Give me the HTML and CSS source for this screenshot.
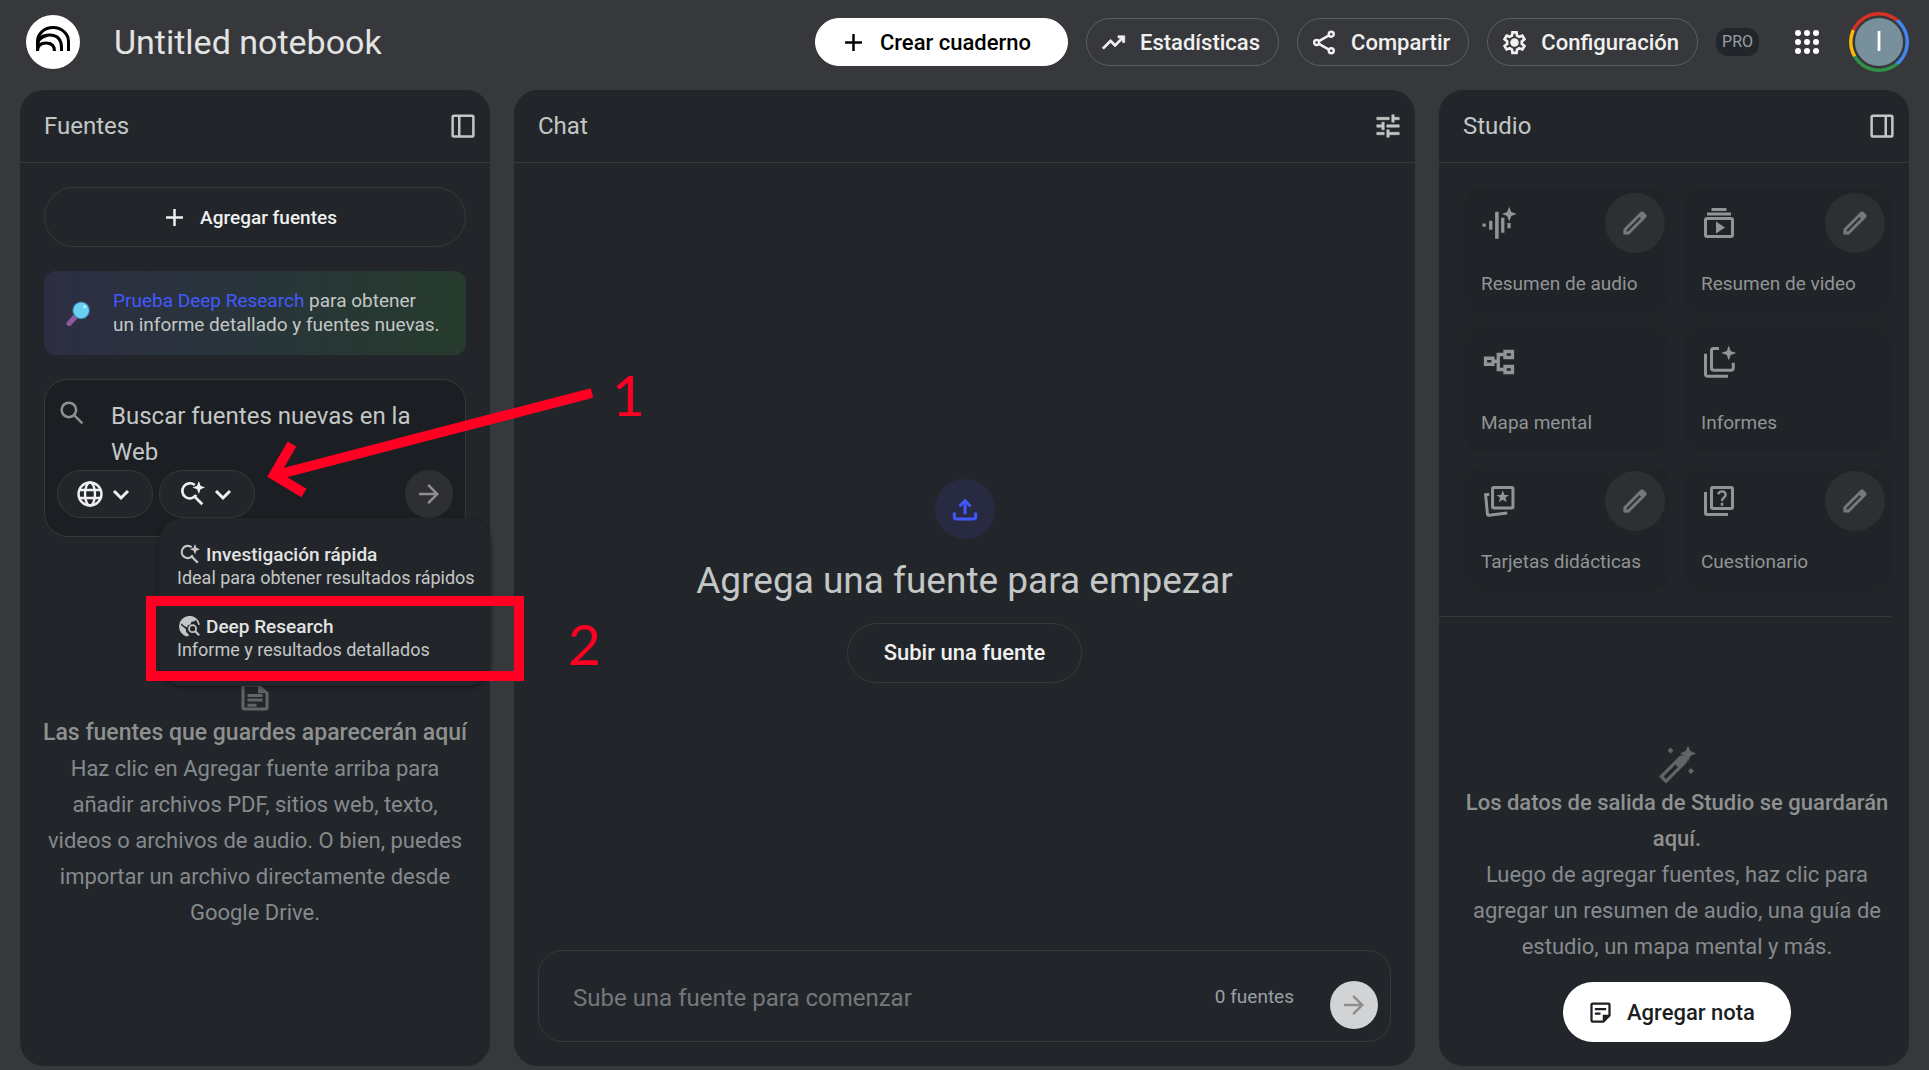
FILE: index.html
```html
<!DOCTYPE html>
<html lang="es">
<head>
  <meta charset="UTF-8">
  <meta name="viewport" content="width=device-width, initial-scale=1.0">
  <title>Untitled notebook</title>
  <link rel="stylesheet" href="styles.css">
</head>
<body>
  <!-- Shared icons -->
  <svg class="defs" width="0" height="0" aria-hidden="true">
    <symbol id="i-plus" viewBox="0 0 24 24"><path d="M10.900 4.500h2.200v6.400h6.400v2.200h-6.400v6.400h-2.200v-6.400H4.500v-2.200h6.400z"/></symbol>
    <symbol id="i-pencil" viewBox="0 0 24 24"><path d="M5 19h1.400L17 8.400 15.600 7 5 17.600zm-2 2v-4.250L16.200 3.600q.3-.3.660-.450Q17.200 3 17.600 3t.770.150.650.450L20.400 5q.3.280.440.650.160.370.160.750 0 .4-.160.760-.140.360-.440.660L7.250 21z" stroke="currentColor" stroke-width=".5"/></symbol>
    <symbol id="i-arrow" viewBox="0 0 24 24"><path d="M12 20l-1.400-1.400L16.200 13H4v-2h12.200l-5.600-5.600L12 4l8 8z"/></symbol>
    <symbol id="i-down" viewBox="0 0 24 24"><path d="M5 9l7 7 7-7" fill="none" stroke="currentColor" stroke-width="3"/></symbol>
    <symbol id="i-spark-search" viewBox="0 0 24 24"><path d="M14.500 3.700A7 7 0 1 0 15.900 13" fill="none" stroke="currentColor" stroke-width="2.400"/><path d="M13.500 13.500l8 8" fill="none" stroke="currentColor" stroke-width="2.600"/><path d="M18.300 0l1.600 4.400L24 6l-4.100 1.600L18.300 12l-1.600-4.400L12.500 6l4.200-1.600z"/></symbol>
  </svg>

  <header class="topbar">
    <a class="logo" href="#" aria-label="Inicio">
      <svg viewBox="0 0 54 54" fill="none" stroke="#000" stroke-width="3">
        <path d="M11.500 36V26.500a15.500 14 0 0 1 31 0V36"/>
        <path d="M11.500 30q1-10 12-10 12 0 12 13v3"/>
        <path d="M11.500 36q0-8 8.500-8t8.500 8"/>
        <path d="M11.500 27q4-5 10-6" stroke-width="2"/>
      </svg>
    </a>
    <h1 class="notebook-title">Untitled notebook</h1>
    <div class="actions">
      <button class="btn btn-primary"><svg class="icon"><use href="#i-plus"/></svg>Crear cuaderno</button>
      <button class="btn"><svg class="icon" viewBox="0 0 24 24"><path d="M3.400 18L2 16.600l7.400-7.450 4 4L18.600 8H16V6h6v6h-2V9.400L13.400 16l-4-4z" stroke="currentColor" stroke-width=".6"/></svg>Estadísticas</button>
      <button class="btn"><svg class="icon" viewBox="0 0 24 24" fill="none" stroke="currentColor" stroke-width="2.200"><circle cx="18" cy="4.600" r="2.200"/><circle cx="5" cy="12" r="2.200"/><circle cx="18" cy="19.400" r="2.200"/><path d="M7 10.800l9-5.100M7 13.200l9 5.100"/></svg>Compartir</button>
      <button class="btn"><svg class="icon" viewBox="0 0 24 24"><path d="M10.200 2h3.600l.5 2.900 1.900 1.100 2.800-1 1.800 3.100-2.300 1.900v2.200l2.300 1.900-1.800 3.100-2.800-1-1.900 1.100-.5 2.900h-3.600l-.5-2.900-1.900-1.100-2.800 1-1.800-3.100 2.300-1.900v-2.200L3.200 8.100 5 5l2.800 1 1.900-1.100z" transform="translate(0 1)" fill="none" stroke="currentColor" stroke-width="2.400"/><circle cx="12" cy="12" r="3.800"/></svg>Configuración</button>
      <span class="pro">PRO</span>
      <button class="apps" aria-label="Aplicaciones">
        <svg viewBox="0 0 24 24"><circle cx="3" cy="3" r="3"/><circle cx="12" cy="3" r="3"/><circle cx="21" cy="3" r="3"/><circle cx="3" cy="12" r="3"/><circle cx="12" cy="12" r="3"/><circle cx="21" cy="12" r="3"/><circle cx="3" cy="21" r="3"/><circle cx="12" cy="21" r="3"/><circle cx="21" cy="21" r="3"/></svg>
      </button>
      <button class="avatar" aria-label="Cuenta"><span>I</span></button>
    </div>
  </header>

  <main class="panels">
    <section class="panel">
      <div class="panel-head">
        <h2>Fuentes</h2>
        <button class="icon-btn" aria-label="Contraer fuentes"><svg viewBox="0 0 24 24" fill="none" stroke="currentColor" stroke-width="2"><rect x="3.700" y="3.700" width="16.600" height="16.600" rx="1"/><path d="M9 4v16"/></svg></button>
      </div>
      <div class="panel-body sources">
        <button class="btn-outline add-source"><svg class="icon"><use href="#i-plus"/></svg>Agregar fuentes</button>

        <div class="promo">
          <svg class="lens" viewBox="0 0 24 24"><path d="M3 21.500l6-6.500" stroke="#8e5a9e" stroke-width="5" stroke-linecap="round"/><circle cx="14.500" cy="9" r="8.500" fill="#3b6ea8"/><circle cx="14.500" cy="9" r="7.500" fill="#68d0f0"/><circle cx="18" cy="5.500" r="1.500" fill="#c8f2ff"/></svg>
          <p><a href="#">Prueba Deep Research</a> para obtener<br>un informe detallado y fuentes nuevas.</p>
        </div>

        <div class="search-box">
          <div class="search-row">
            <svg class="search-icon" viewBox="0 0 24 24" fill="none" stroke="currentColor" stroke-width="2"><circle cx="9.500" cy="9.500" r="5.800"/><path d="M13.700 13.700l6.600 6.600"/></svg>
            <textarea rows="2" aria-label="Buscar fuentes" placeholder="Buscar fuentes nuevas en la Web"></textarea>
          </div>
          <div class="search-tools">
            <button class="chip" aria-label="Web">
              <svg class="chip-icon" viewBox="0 0 26 26" fill="none" stroke="currentColor" stroke-width="2.400"><circle cx="13" cy="13" r="11.500"/><ellipse cx="13" cy="13" rx="5" ry="11.500"/><path d="M2 9h22M2 17h22"/></svg>
              <svg class="caret"><use href="#i-down"/></svg>
            </button>
            <button class="chip" aria-label="Tipo de investigación" aria-expanded="true">
              <svg class="chip-icon"><use href="#i-spark-search"/></svg>
              <svg class="caret"><use href="#i-down"/></svg>
            </button>
            <button class="send" aria-label="Buscar"><svg><use href="#i-arrow"/></svg></button>
          </div>
          <div class="menu" role="menu">
            <button class="menu-item" role="menuitem">
              <span class="menu-title"><svg><use href="#i-spark-search"/></svg>Investigación rápida</span>
              <span class="menu-sub">Ideal para obtener resultados rápidos</span>
            </button>
            <button class="menu-item" role="menuitem">
              <span class="menu-title"><svg viewBox="0 0 24 24"><path d="M9.500 22.600A11 11 0 1 1 22.900 10" fill="none" stroke="currentColor" stroke-width="2"/><path d="M2 10l6 5v3l3 3v2C5 22 1 17 2 10zM5 4c4-4 11-4 14 0-1 3-4 2-5 3s0 3-2 3-3 1-2 3l-3-1-5-4z"/><circle cx="15.500" cy="14.500" r="4" fill="none" stroke="currentColor" stroke-width="2"/><path d="M18.500 17.500l4.500 4.500" fill="none" stroke="currentColor" stroke-width="2.400"/></svg>Deep Research</span>
              <span class="menu-sub">Informe y resultados detallados</span>
            </button>
          </div>
        </div>

        <div class="empty">
          <svg class="empty-doc" viewBox="0 0 24 24"><path d="M5 3h9l7 6v10q0 2-2 2H5q-2 0-2-2V5q0-2 2-2zm0 2v14h14V9.500h-5V5z"/><path d="M7 10h10v2H7zM7 13h10v2H7zM7 16.500h6v2H7z"/></svg>
          <h3>Las fuentes que guardes aparecerán aquí</h3>
          <p>Haz clic en Agregar fuente arriba para<br>añadir archivos PDF, sitios web, texto,<br>videos o archivos de audio. O bien, puedes<br>importar un archivo directamente desde<br>Google Drive.</p>
        </div>
      </div>
    </section>

    <section class="panel">
      <div class="panel-head">
        <h2>Chat</h2>
        <button class="icon-btn" aria-label="Configurar chat"><svg viewBox="0 0 24 24"><path d="M11 21v-6h2v2h8v2h-8v2zm-8-2v-2h6v2zm4-4v-2H3v-2h4V9h2v6zm4-2v-2h10v2zm4-4V3h2v2h4v2h-4v2zM3 7V5h10v2z" stroke="currentColor" stroke-width=".4"/></svg></button>
      </div>
      <div class="panel-body chat">
        <div class="chat-empty">
          <span class="upload"><svg viewBox="0 0 24 24"><path d="M11 16V7.800L8.400 10.400 7 9l5-5 5 5-1.400 1.400L13 7.800V16zm-5 5q-2 0-2.800-.6Q2.500 20 2.500 18.500V15h2v4h15v-4h2v3.500q0 1.500-.7 1.900-.8.600-2.800.6z" stroke="currentColor" stroke-width=".4"/></svg></span>
          <h3>Agrega una fuente para empezar</h3>
          <button class="btn-outline upload-btn">Subir una fuente</button>
        </div>
        <form class="composer">
          <input type="text" aria-label="Mensaje" placeholder="Sube una fuente para comenzar">
          <span class="count">0 fuentes</span>
          <button class="send send-light" type="button" aria-label="Enviar"><svg><use href="#i-arrow"/></svg></button>
        </form>
      </div>
    </section>

    <section class="panel">
      <div class="panel-head">
        <h2>Studio</h2>
        <button class="icon-btn" aria-label="Contraer Studio"><svg viewBox="0 0 24 24" fill="none" stroke="currentColor" stroke-width="2"><rect x="3.700" y="3.700" width="16.600" height="16.600" rx="1"/><path d="M15 4v16"/></svg></button>
      </div>
      <div class="panel-body studio">
        <div class="tiles">
          <div class="tile">
            <svg viewBox="0 0 24 24"><path d="M1 12.300h2.200v2.200H1zM5.400 10.500h2.200v6H5.400zM9.400 4.500h2.400v18H9.400zM13.400 8.500h2.200v10h-2.200zM17.600 12h2.200v3.500h-2.200zM18.800 1.200l1.400 3.400 3.600 1.400-3.600 1.400-1.400 3.600-1.400-3.600L14 6l3.400-1.400z"/></svg>
            <span>Resumen de audio</span>
            <button class="edit" aria-label="Personalizar resumen de audio"><svg><use href="#i-pencil"/></svg></button>
          </div>
          <div class="tile">
            <svg viewBox="0 0 24 24"><path d="M4 22q-2 0-2-2V10q0-2 2-2h16q2 0 2 2v10q0 2-2 2zm0-2h16V10H4zm6-1l6-4-6-4zM4 7V5h16v2zm3-3V2h10v2z"/></svg>
            <span>Resumen de video</span>
            <button class="edit" aria-label="Personalizar resumen de video"><svg><use href="#i-pencil"/></svg></button>
          </div>
          <div class="tile">
            <svg viewBox="0 0 24 24" fill="none" stroke="currentColor" stroke-width="2.200"><path d="M3 9.500h5v4H3zM16 5h5v4h-5zM16 15h5v4h-5zM8 11.500h3.500M16 7h-4.500v10H16"/></svg>
            <span>Mapa mental</span>
          </div>
          <div class="tile">
            <svg viewBox="0 0 24 24"><path d="M12 3H8.500Q7 3 7 4.500V16q0 1.500 1.500 1.500H20q1.500 0 1.500-1.500v-3.500M3 6.500V20q0 1.500 1.500 1.500H18" fill="none" stroke="currentColor" stroke-width="2"/><path d="M18.500 1l1.300 3.700L23.500 6l-3.700 1.300L18.500 11l-1.300-3.700L13.500 6l3.700-1.300z"/></svg>
            <span>Informes</span>
          </div>
          <div class="tile">
            <svg viewBox="0 0 24 24"><path d="M8.500 3h12q.8 0 .8.800v12q0 .8-.8.800h-12q-.8 0-.8-.8v-12q0-.8.800-.8zM5.500 7.500l-2.400.4 1.200 13q.1.700.9.600L17.500 20" fill="none" stroke="currentColor" stroke-width="2"/><path d="M14.500 5l1.200 3h3l-2.400 1.900.9 3-2.700-1.800-2.700 1.800.9-3L10.300 8h3z"/></svg>
            <span>Tarjetas didácticas</span>
            <button class="edit" aria-label="Personalizar tarjetas didácticas"><svg><use href="#i-pencil"/></svg></button>
          </div>
          <div class="tile">
            <svg viewBox="0 0 24 24" fill="none" stroke="currentColor" stroke-width="2"><rect x="7" y="3" width="14" height="14" rx=".8"/><path d="M3 6v14q0 1 1 1h14"/><path d="M11.500 7.500q.4-1.900 2.500-1.900 2.400 0 2.400 2.200 0 1-1.200 2-1.200 1-1.200 2.200M14 13.200v2" stroke-width="1.600"/></svg>
            <span>Cuestionario</span>
            <button class="edit" aria-label="Personalizar cuestionario"><svg><use href="#i-pencil"/></svg></button>
          </div>
        </div>
        <div class="studio-empty">
          <svg class="wand" viewBox="0 0 40 40"><path d="M2 31.500L22 11.500q4-3 7 0 3 3 0 7L9 38.500zm4.500 0L9 34l12-12-2.500-2.500z" fill-rule="evenodd"/><path d="M31 .5l2.400 5.600L39 8.500l-5.600 2.400L31 16.500l-2.400-5.600L23 8.500l5.600-2.400zM13.500 2.500l3 3-3 3-3-3zM34 23l3 3-3 3-3-3z"/></svg>
          <h3>Los datos de salida de Studio se guardarán<br>aquí.</h3>
          <p>Luego de agregar fuentes, haz clic para<br>agregar un resumen de audio, una guía de<br>estudio, un mapa mental y más.</p>
          <button class="note-btn"><svg viewBox="0 0 24 24"><path d="M5 5v14h9v-5h5V5zm0 16q-2 0-2-2V5q0-2 2-2h14q2 0 2 2v10l-6 6zm2-7v-2h5v2zm0-4V8h10v2z"/></svg>Agregar nota</button>
        </div>
      </div>
    </section>
  </main>

  <!-- Step marks drawn over the interface -->
  <svg class="mark-arrow" viewBox="0 0 330 110" aria-hidden="true"><path d="M327 9L11 91M27 60L9 91l30 18"/></svg>
  <span class="mark-number mark-one">1</span>
  <div class="mark-box"></div>
  <span class="mark-number mark-two">2</span>
</body>
</html>
```
FILE: styles.css
```css
* {
  box-sizing: border-box;
}

body {
  display: flex;
  flex-direction: column;
  min-height: 100vh;
  margin: 0;
  position: relative;
  background: #37383b;
  color: #c4c7c5;
  font-family: Roboto, "Liberation Sans", sans-serif;
  font-size: 19px;
}

h1, h2, h3, p {
  margin: 0;
  font-weight: 400;
}

button, input, textarea {
  font: inherit;
  color: inherit;
}

button {
  display: flex;
  align-items: center;
  justify-content: center;
  padding: 0;
  border: 0;
  background: none;
  cursor: pointer;
}

svg {
  flex: none;
  fill: currentColor;
}

svg[fill="none"] {
  fill: none;
}

.defs {
  position: absolute;
}

/* Top bar */
.topbar {
  display: flex;
  align-items: center;
  height: 90px;
  padding: 0 20px 6px 26px;
}

.logo {
  width: 54px;
  height: 54px;
  border-radius: 50%;
  background: #fff;
}

.notebook-title {
  margin-left: 34px;
  color: #e3e3e3;
  font-size: 34px;
}

.actions {
  display: flex;
  align-items: center;
  gap: 18px;
  margin-left: auto;
}

.icon {
  width: 27px;
  height: 27px;
}

.btn {
  gap: 13px;
  height: 48px;
  padding: 0 18px 0 13px;
  border: 1px solid #5c5e61;
  border-radius: 24px;
  color: #f0f0f0;
  font-size: 22px;
  font-weight: 500;
}

.btn-primary {
  padding: 0 36px 0 24px;
  border-color: #fff;
  background: #fff;
  color: #000;
}

.pro {
  padding: 0 6px;
  border-radius: 12px;
  background: #22262b;
  color: #9aa0a6;
  font-size: 16px;
  line-height: 28px;
}

.apps {
  width: 60px;
  height: 48px;
  color: #fff;
}

.apps svg {
  width: 24px;
  height: 24px;
}

.avatar {
  width: 60px;
  height: 60px;
  margin-left: -6px;
  border-radius: 50%;
  background:
    radial-gradient(circle, #37383b 26px, transparent 27px),
    conic-gradient(from 320deg, #d93025 0 80deg, #4285f4 0 180deg, #2d9248 0 280deg, #fbbc04 0 335deg, #d93025 0);
}

.avatar span {
  width: 48px;
  border-radius: 50%;
  background: #78909c;
  color: #fff;
  font-size: 27px;
  line-height: 48px;
}

/* Panels */
.panels {
  flex: 1;
  display: grid;
  grid-template-columns: 470px 1fr 470px;
  gap: 24px;
  padding: 0 20px 4px;
}

.panel {
  display: flex;
  flex-direction: column;
  border-radius: 24px;
  background: #22262b;
}

.panel-head {
  display: flex;
  align-items: center;
  justify-content: space-between;
  height: 73px;
  padding: 0 12px 0 24px;
  border-bottom: 1px solid #37383b;
}

.panel-head h2 {
  font-size: 24px;
}

.icon-btn svg {
  width: 30px;
  height: 30px;
}

.panel-body {
  flex: 1;
  display: flex;
  flex-direction: column;
  padding: 24px;
}

.btn-outline {
  height: 60px;
  border: 1px solid #37383b;
  border-radius: 30px;
  color: #f0f0f0;
  font-weight: 500;
}

/* Sources */
.sources {
  gap: 24px;
}

.add-source {
  gap: 12px;
  padding-right: 12px;
}

.promo {
  display: flex;
  align-items: center;
  gap: 22px;
  height: 84px;
  padding: 0 12px 0 22px;
  border-radius: 12px;
  background: linear-gradient(90deg, #2d2e43, #28353a 50%, #263b2d);
  line-height: 24px;
  white-space: nowrap;
}

.promo a {
  color: #4259ff;
  text-decoration: none;
}

.lens {
  width: 25px;
  height: 25px;
}

.search-box {
  position: relative;
  height: 158px;
  padding: 18px 12px;
  border: 1px solid #37383b;
  border-radius: 24px;
  background: #1b1e22;
}

.search-row {
  display: flex;
  gap: 24px;
}

.search-icon {
  width: 30px;
  height: 30px;
  color: #8e918f;
}

.search-row textarea {
  flex: 1;
  height: 72px;
  padding: 0;
  border: 0;
  outline: 0;
  resize: none;
  overflow: hidden;
  background: none;
  font-size: 24px;
  line-height: 36px;
}

.search-row textarea::placeholder {
  color: #c4c7c5;
  opacity: 1;
}

.search-tools {
  display: flex;
  gap: 6px;
}

.chip {
  gap: 6px;
  width: 96px;
  height: 48px;
  border: 1px solid #37383b;
  border-radius: 24px;
  background: #22262b;
  color: #f0f0f0;
}

.chip-icon {
  width: 26px;
  height: 26px;
}

.caret {
  width: 24px;
  height: 24px;
}

.send {
  width: 48px;
  height: 48px;
  margin-left: auto;
  border-radius: 50%;
  background: #2d2f33;
  color: #8e8e8e;
}

.send svg {
  width: 30px;
  height: 30px;
}

.menu {
  position: absolute;
  top: 138px;
  left: 114px;
  z-index: 1;
  width: 332px;
  padding: 12px 0;
  border-radius: 24px;
  background: #22262b;
  box-shadow: 0 2px 5px rgba(0, 0, 0, 0.4);
}

.menu-item {
  flex-direction: column;
  align-items: flex-start;
  width: 100%;
  height: 72px;
  padding: 0 18px;
  white-space: nowrap;
}

.menu-title {
  display: flex;
  align-items: center;
  gap: 6px;
  padding-left: 2px;
  color: #e3e3e3;
  font-weight: 500;
  line-height: 23px;
}

.menu-title svg {
  width: 21px;
  height: 21px;
  color: #c4c7c5;
}

.menu-sub {
  font-size: 18px;
  line-height: 23px;
}

.empty {
  flex: 1;
  display: flex;
  flex-direction: column;
  align-items: center;
  justify-content: center;
  padding-top: 6px;
}

.empty h3, .studio-empty h3 {
  color: #8e918f;
  font-size: 22px;
  font-weight: 500;
  line-height: 36px;
  white-space: nowrap;
}

.empty h3 {
  font-size: 23px;
}

.empty p, .studio-empty p {
  color: #868a8d;
  font-size: 22px;
  line-height: 36px;
  white-space: nowrap;
}

.empty, .studio-empty {
  text-align: center;
}

.empty-doc {
  width: 36px;
  height: 36px;
  color: #626466;
}

/* Chat */
.chat-empty {
  flex: 1;
  display: flex;
  flex-direction: column;
  align-items: center;
  justify-content: center;
  gap: 18px;
  padding-top: 24px;
}

.upload {
  display: flex;
  align-items: center;
  justify-content: center;
  width: 60px;
  height: 60px;
  border-radius: 50%;
  background: #272a40;
  color: #4259ff;
}

.upload svg {
  width: 30px;
  height: 30px;
}

.chat-empty h3 {
  font-size: 37px;
  line-height: 48px;
}

.upload-btn {
  padding: 0 36px;
  font-size: 22px;
}

.composer {
  display: flex;
  align-items: center;
  height: 92px;
  padding: 0 12px 0 34px;
  border: 1px solid #37383b;
  border-radius: 24px;
}

.composer input {
  flex: 1;
  padding: 4px 0 0;
  border: 0;
  outline: 0;
  background: none;
  font-size: 24px;
}

.composer input::placeholder {
  color: #75777a;
  opacity: 1;
}

.count {
  margin-right: 36px;
  color: #9aa0a6;
}

.send-light {
  margin: 18px 0 0;
  background: #d2d3d4;
}

/* Studio */
.studio {
  padding-right: 18px;
}

.tiles {
  display: grid;
  grid-template-columns: 1fr 1fr;
  gap: 12px;
  margin-left: -24px;
  padding: 0 0 24px 24px;
  border-bottom: 1px solid #37383b;
}

.tile {
  position: relative;
  display: flex;
  flex-direction: column;
  justify-content: space-between;
  height: 127px;
  padding: 18px;
  border-radius: 24px;
  background: #202327;
  color: #929496;
}

.tile > svg {
  width: 36px;
  height: 36px;
}

.tile span {
  line-height: 24px;
}

.edit {
  position: absolute;
  top: 6px;
  right: 6px;
  width: 60px;
  height: 60px;
  border-radius: 50%;
  background: #2d2f33;
  color: #76787a;
}

.edit svg {
  width: 30px;
  height: 30px;
}

.studio-empty {
  display: flex;
  flex-direction: column;
  align-items: center;
  margin-top: auto;
}

.wand {
  width: 40px;
  height: 40px;
  color: #626466;
}

.note-btn {
  gap: 13px;
  height: 60px;
  margin-top: 17px;
  padding: 0 36px 0 24px;
  border-radius: 30px;
  background: #fff;
  color: #1b1e22;
  font-size: 22px;
  font-weight: 500;
}

.note-btn svg {
  width: 27px;
  height: 27px;
}

/* Step marks */
.mark-arrow {
  position: absolute;
  top: 384px;
  left: 265px;
  z-index: 2;
  width: 330px;
  height: 110px;
  fill: none;
  stroke: #ff0022;
  stroke-width: 10;
  overflow: visible;
}

.mark-box {
  position: absolute;
  top: 596px;
  left: 146px;
  z-index: 2;
  width: 378px;
  height: 85px;
  border: 10px solid #ff0022;
}

.mark-number {
  position: absolute;
  z-index: 2;
  color: #ff0022;
  font-family: Lato, sans-serif;
  font-size: 57px;
  line-height: 60px;
}

.mark-one {
  top: 364px;
  left: 612px;
}

.mark-two {
  top: 613px;
  left: 568px;
}
```
